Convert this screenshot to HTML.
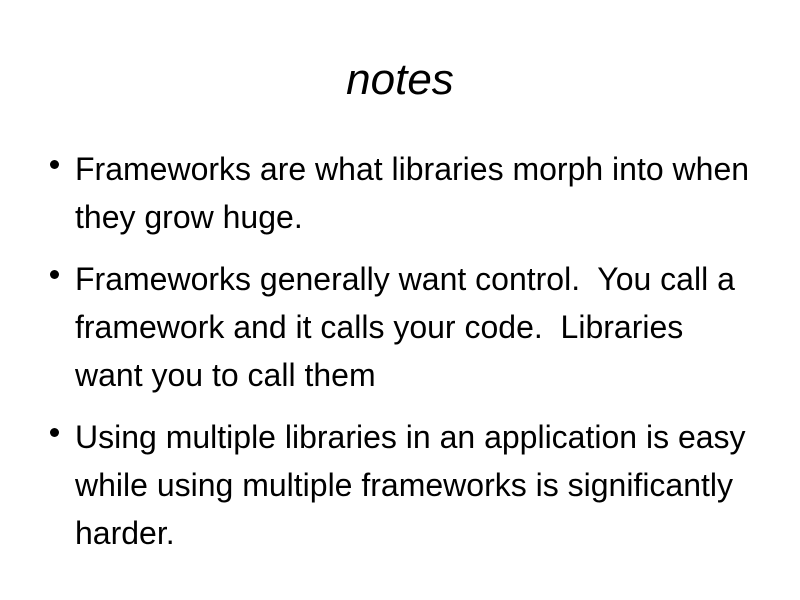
<!DOCTYPE html>
<html><head><style>
body{margin:0;width:800px;height:600px;background:#fff;font-family:"Liberation Sans",sans-serif;color:#000;position:relative;overflow:hidden}
h1{position:absolute;top:55px;left:0;width:800px;text-align:center;margin:0;font-weight:normal;font-style:italic;font-size:44px;line-height:50px}
.b{position:absolute;left:75px;font-size:32px;line-height:48px;width:720px;white-space:nowrap}
.d{position:absolute;left:-25px;top:15px;width:9px;height:9px;border-radius:50%;background:#000}
</style></head><body>
<h1>notes</h1>
<div class="b" style="top:145px"><span class="d"></span>Frameworks are what libraries morph into when<br>they grow huge.</div>
<div class="b" style="top:255px"><span class="d"></span>Frameworks generally want control.&nbsp; You call a<br>framework and it calls your code.&nbsp; Libraries<br>want you to call them</div>
<div class="b" style="top:413px"><span class="d"></span>Using multiple libraries in an application is easy<br>while using multiple frameworks is significantly<br>harder.</div>
</body></html>
